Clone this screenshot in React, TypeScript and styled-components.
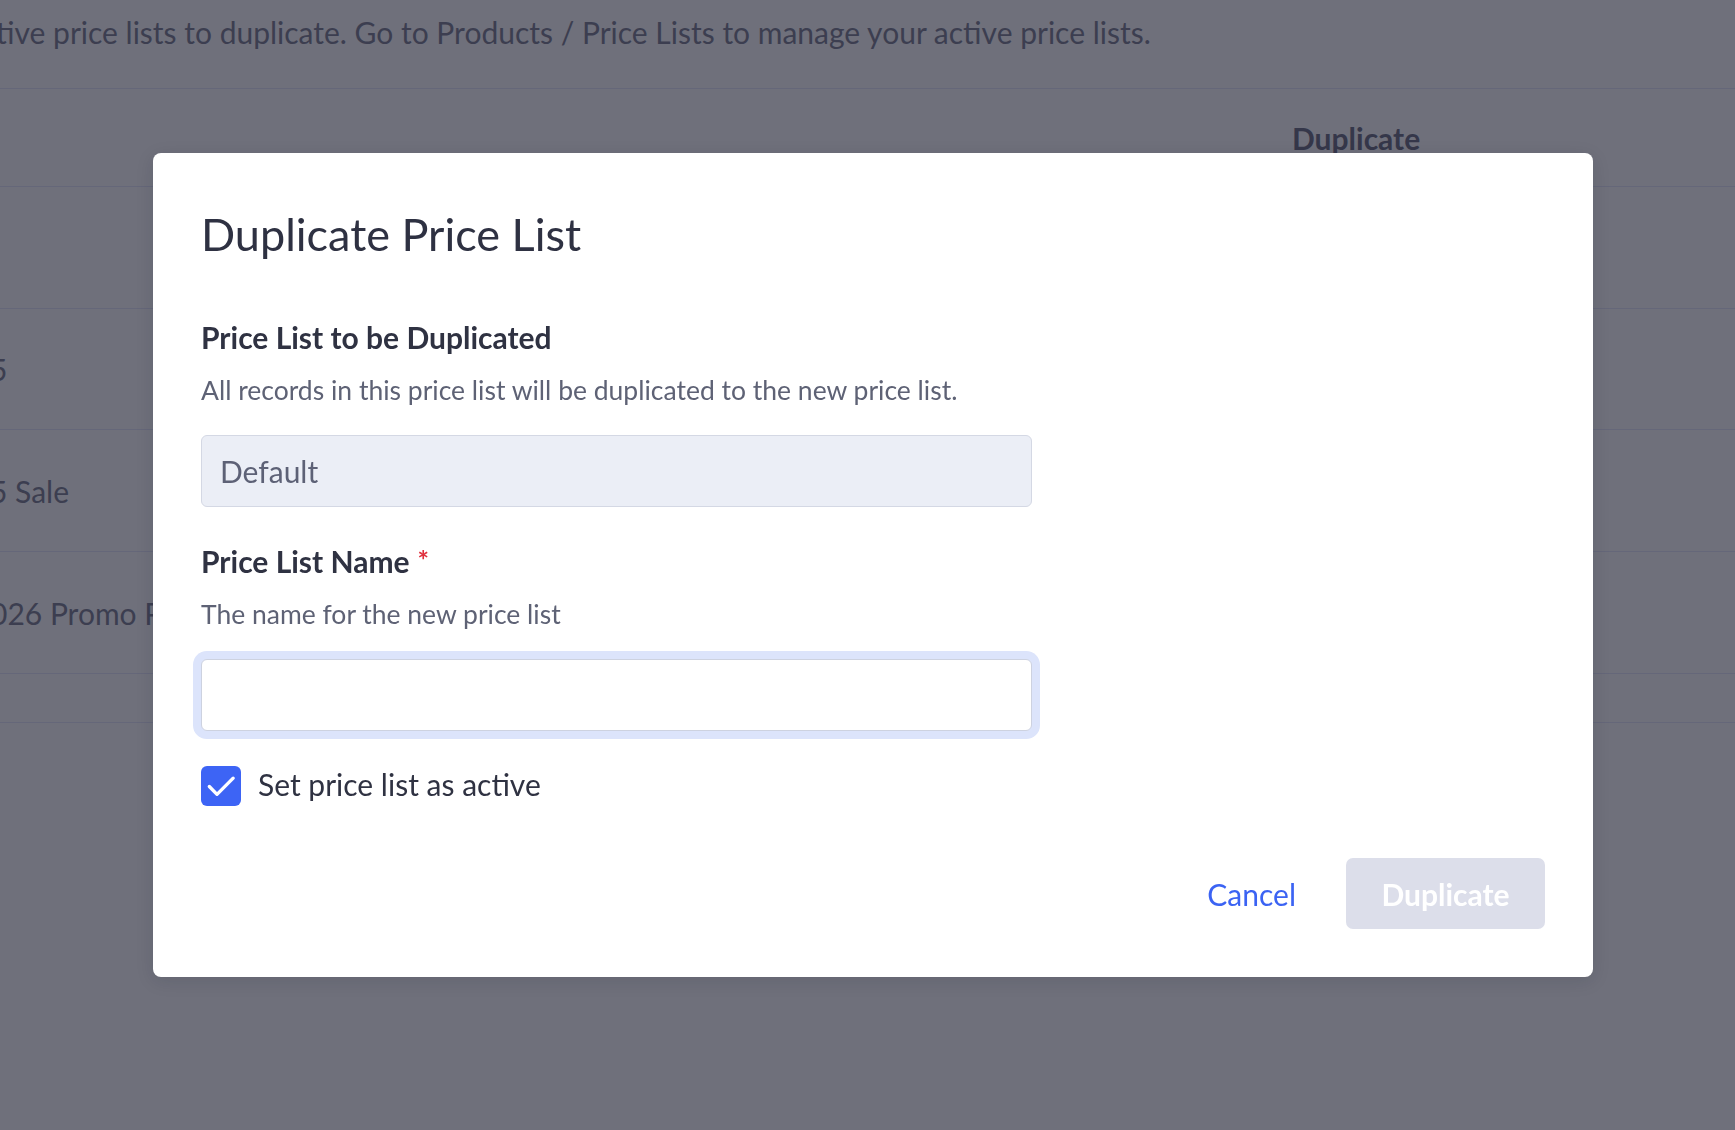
import React from 'react';
import styled, { createGlobalStyle } from 'styled-components';

const GlobalStyle = createGlobalStyle`
  html, body {
    margin: 0;
    padding: 0;
  }
  body {
    font-family: Lato, "Liberation Sans", sans-serif;
    background: #6f707b;
  }
  * {
    box-sizing: border-box;
  }
`;

const Page = styled.div`
  width: 100vw;
  height: 100vh;
  overflow: hidden;
  background: #6f707b;
  color: #3c3e50;
`;

const Intro = styled.p`
  margin: 14px 0 0 -4px;
  font-size: 30px;
  line-height: 36px;
  white-space: nowrap;
`;

const Table = styled.div`
  margin-top: 38px;
  border-top: 1px solid #656779;
`;

const Row = styled.div<{ $height: number }>`
  display: grid;
  grid-template-columns: 1292px 1fr;
  align-items: center;
  height: ${(p) => p.$height}px;
  border-bottom: 1px solid #656779;
`;

const NameCell = styled.div`
  margin-left: -10px;
  font-size: 30px;
  white-space: nowrap;
  overflow: hidden;
`;

const HeadCell = styled.div`
  font-size: 30px;
  font-weight: 700;
  color: #35374a;
`;

const Overlay = styled.div`
  position: fixed;
  inset: 0;
  display: flex;
  align-items: center;
  justify-content: center;
  padding-left: 11px;
`;

const Modal = styled.div`
  width: 1440px;
  background: #ffffff;
  border-radius: 8px;
  padding: 54px 48px 48px;
  box-shadow: 0 4px 18px rgba(20, 22, 40, 0.12);
  display: flex;
  flex-direction: column;
`;

const Title = styled.h2`
  margin: 0 0 58px;
  font-size: 45px;
  line-height: 54px;
  font-weight: 400;
  color: #2e3142;
`;

const Field = styled.div`
  width: 831px;
  display: flex;
  flex-direction: column;
  margin-bottom: 35px;
`;

const Label = styled.div`
  font-size: 30px;
  line-height: 36px;
  font-weight: 700;
  color: #2f3242;
`;

const Required = styled.span`
  color: #e0303d;
  font-size: 27px;
  font-weight: 700;
  vertical-align: 3px;
  margin-left: 8px;
`;

const Hint = styled.div`
  margin: 20px 0 29px;
  font-size: 26.5px;
  line-height: 31px;
  color: #5e6275;
`;

const Input = styled.input<{ $focused?: boolean }>`
  width: 100%;
  height: 72px;
  padding: 0 18px;
  font-family: inherit;
  font-size: 30px;
  color: #5d6176;
  border-radius: 6px;
  border: 1px solid ${(p) => (p.$focused ? '#cdd2e0' : '#d4d8e4')};
  background: ${(p) => (p.$focused ? '#ffffff' : '#ebeef6')};
  box-shadow: ${(p) => (p.$focused ? '0 0 0 8px #dce4fb' : 'none')};
  outline: none;
`;

const CheckRow = styled.label`
  display: flex;
  align-items: center;
  gap: 17px;
  font-size: 30px;
  color: #2f3242;
  margin-bottom: 52px;
`;

const CheckText = styled.span`
  margin-top: -4px;
`;

const CheckBox = styled.span`
  width: 40px;
  height: 40px;
  border-radius: 6px;
  background: #3d64f5;
  display: flex;
  align-items: center;
  justify-content: center;
`;

const Footer = styled.div`
  display: flex;
  justify-content: flex-end;
  align-items: center;
  gap: 26px;
`;

const LinkButton = styled.button`
  border: none;
  background: none;
  padding: 0 24px;
  height: 71px;
  font-family: inherit;
  font-size: 30px;
  color: #3b63f3;
  cursor: pointer;
`;

const PrimaryButton = styled.button`
  border: none;
  height: 71px;
  width: 199px;
  border-radius: 7px;
  background: #dcdeea;
  color: #ffffff;
  font-family: inherit;
  font-size: 30px;
  font-weight: 700;
`;

const rows = [
  { name: '', height: 122 },
  { name: '5', height: 121 },
  { name: '5 Sale', height: 122 },
  { name: '026 Promo Pricing', height: 122 },
  { name: '', height: 49 },
];

const App: React.FC = () => {
  return (
    <>
      <GlobalStyle />
      <Page>
        <Intro>
          tive price lists to duplicate. Go to Products / Price Lists to manage your active price lists.
        </Intro>
        <Table>
          <Row $height={98}>
            <div />
            <HeadCell>Duplicate</HeadCell>
          </Row>
          {rows.map((r, i) => (
            <Row key={i} $height={r.height}>
              <NameCell>{r.name}</NameCell>
              <div />
            </Row>
          ))}
        </Table>
      </Page>
      <Overlay>
        <Modal>
          <Title>Duplicate Price List</Title>
          <Field>
            <Label>Price List to be Duplicated</Label>
            <Hint>All records in this price list will be duplicated to the new price list.</Hint>
            <Input value="Default" readOnly />
          </Field>
          <Field>
            <Label>
              Price List Name<Required>*</Required>
            </Label>
            <Hint>The name for the new price list</Hint>
            <Input $focused value="" readOnly />
          </Field>
          <CheckRow>
            <CheckBox>
              <svg width="40" height="40" viewBox="0 0 24 24" fill="none">
                <path d="M5 12.3 L9.6 17 L19.3 7.3" stroke="#ffffff" strokeWidth="2" strokeLinecap="round" strokeLinejoin="round" />
              </svg>
            </CheckBox>
            <CheckText>Set price list as active</CheckText>
          </CheckRow>
          <Footer>
            <LinkButton>Cancel</LinkButton>
            <PrimaryButton>Duplicate</PrimaryButton>
          </Footer>
        </Modal>
      </Overlay>
    </>
  );
};

export default App;
